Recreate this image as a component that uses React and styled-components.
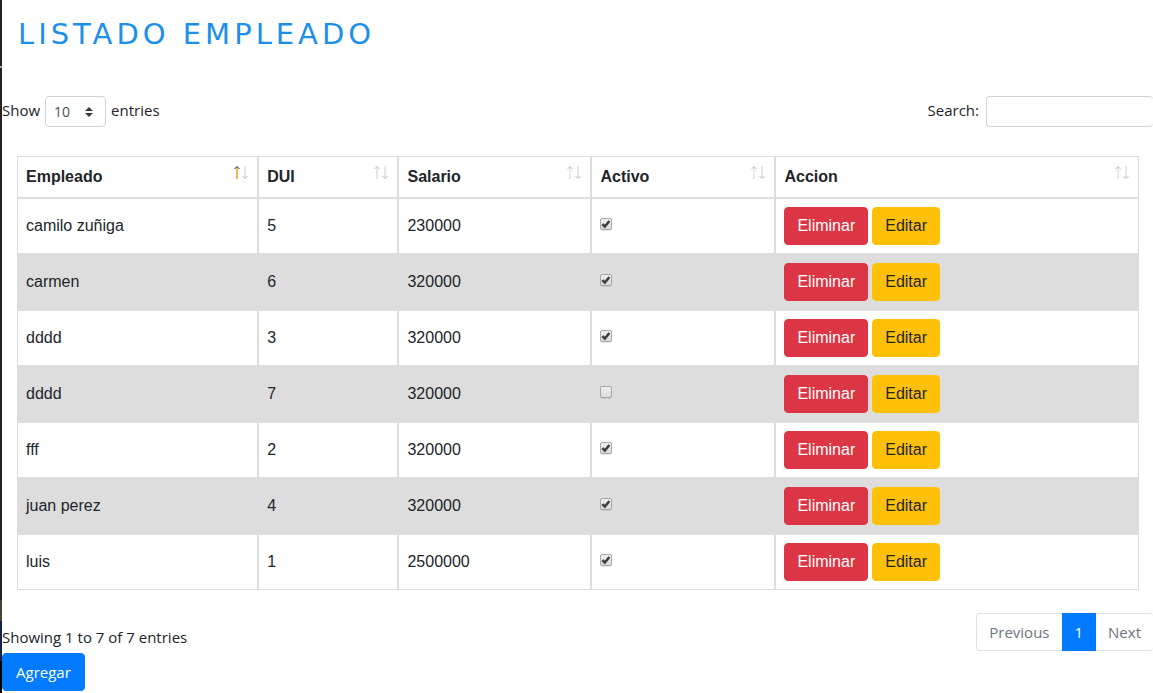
import React from 'react';
import styled, { createGlobalStyle } from 'styled-components';

const line = '#dddddd';
const ui = '"Open Sans", "Noto Sans", sans-serif';
const arial = '"Liberation Sans", Arial, sans-serif';

const checkMark =
  "url(\"data:image/svg+xml,%3Csvg xmlns='http://www.w3.org/2000/svg' viewBox='0 0 10 10'%3E%3Cpath d='M1.4 5.2l2.4 2.4L8.4 2' fill='none' stroke='%23404040' stroke-width='2.6'/%3E%3C/svg%3E\")";
const selectArrows =
  "url(\"data:image/svg+xml,%3Csvg xmlns='http://www.w3.org/2000/svg' viewBox='0 0 4 5'%3E%3Cpath fill='%23343a40' d='M2 0L0 2h4zm0 5L0 3h4z'/%3E%3C/svg%3E\")";

const GlobalStyle = createGlobalStyle`
  * { box-sizing: border-box; }
  body {
    margin: 0;
    background: #fff;
    color: #212529;
    font: 15px/24px ${ui};
  }
`;

const Page = styled.main`
  min-height: 100vh;
  padding-left: 2px;
  background: linear-gradient(
      #222 66px, #aaa 66px, #aaa 68px, #222 68px, #222 600px,
      #444438 600px, #444438 621px, #14224a 621px, #14224a 661px, #000 661px
    ) left top / 2px 100% no-repeat;
`;

const Title = styled.h1`
  margin: 0;
  padding: 16px 16px 44px;
  color: #1c90e8;
  font: 400 29px/36px "DejaVu Sans", Verdana, sans-serif;
  letter-spacing: 4px;
  text-transform: uppercase;
`;

const Bar = styled.div`
  display: flex;
  justify-content: space-between;
  align-items: flex-start;
`;

const Field = styled.label`
  display: flex;
  align-items: flex-start;
  gap: ${(p) => p.$gap}px;
  line-height: 28px;
`;

const LengthSelect = styled.select`
  appearance: none;
  width: 61px;
  height: 31px;
  padding: 0 8px;
  border: 1px solid #ced4da;
  border-radius: 4px;
  background: #fff ${selectArrows} right 12px center / 8px 10px no-repeat;
  color: #495057;
  font: 14px/20px ${ui};
`;

const SearchInput = styled.input`
  width: 167px;
  height: 31px;
  padding: 4px 8px;
  border: 1px solid #ced4da;
  border-right-width: 0;
  border-radius: 4px;
  font: 14px/20px ${ui};
`;

const TableWrap = styled.div`
  padding: 29px 14px 23px 15px;
`;

const Table = styled.table`
  width: 100%;
  table-layout: fixed;
  border-collapse: separate;
  border-spacing: 0;
  font: 16px/24px ${arial};
`;

const HeadCell = styled.th`
  width: ${(p) => p.$width};
  padding: 8px;
  border: 1px solid ${line};
  text-align: left;
`;

const SortButton = styled.button`
  display: flex;
  justify-content: space-between;
  align-items: flex-start;
  width: 100%;
  padding: 0;
  border: 0;
  background: none;
  color: inherit;
  font: 700 16px/24px ${arial};
  cursor: pointer;
`;

const Row = styled.tr`
  background: #fff;
  &:nth-child(even) { background: ${line}; }
`;

const Cell = styled.td`
  padding: 8px;
  border: 1px solid ${line};
  vertical-align: middle;
`;

const Check = styled.input`
  appearance: none;
  display: block;
  width: 12px;
  height: 12px;
  margin: 0 0 4px;
  border: 1px solid #a6a6a6;
  border-radius: 2px;
  background: linear-gradient(#eee, #dcdcdc);
  box-shadow: 0 1px 0 rgba(0, 0, 0, 0.08);
  &:checked {
    background: ${checkMark} center / 10px 10px no-repeat, linear-gradient(#eee, #dcdcdc);
  }
`;

const Actions = styled.div`
  display: flex;
  gap: 4px;
`;

const variants = {
  danger: ['#dc3545', '#fff', 12],
  warning: ['#ffc107', '#212529', 12],
  primary: ['#007bff', '#fff', 13],
};

const Button = styled.button`
  display: block;
  padding: 6px ${(p) => variants[p.$variant][2]}px;
  border: 1px solid ${(p) => variants[p.$variant][0]};
  border-radius: 4px;
  background: ${(p) => variants[p.$variant][0]};
  color: ${(p) => variants[p.$variant][1]};
  font: inherit;
  cursor: pointer;
`;

const Info = styled.div`
  padding: 12px 0 4px;
`;

const Pager = styled.nav`
  display: flex;
`;

const PageLink = styled.a`
  padding: 6px 12px;
  border: 1px solid ${(p) => (p.$active ? '#007bff' : '#dee2e6')};
  border-right-width: ${(p) => (p.$active ? 1 : 0)}px;
  background: ${(p) => (p.$active ? '#007bff' : '#fff')};
  color: ${(p) => (p.$active ? '#fff' : '#6c757d')};
  text-decoration: none;
  &:first-child { border-radius: 4px 0 0 4px; }
  &:last-child { border-left-width: 0; border-radius: 0 4px 4px 0; }
`;

function SortIcon({ ascending }) {
  return (
    <svg width="16" height="16" viewBox="0 0 16 16" fill="none" aria-hidden="true">
      <path d="M4 2v12" stroke={ascending ? '#f0b45c' : '#e8e8e8'} strokeWidth="2" />
      <path d="M1.5 4l2.5-2.5L6.500 4" stroke={ascending ? '#333' : '#bbb'} />
      <path d="M12 1v12" stroke="#e8e8e8" strokeWidth="2" />
      <path d="M9.500 11l2.500 2.500L14.500 11" stroke="#bbb" />
    </svg>
  );
}

const columns = [
  ['Empleado', '21.5%'],
  ['DUI', '12.5%'],
  ['Salario', '17.2%'],
  ['Activo', '16.4%'],
  ['Accion', 'auto'],
];

const employees = [
  ['camilo zuñiga', 5, 230000, true],
  ['carmen', 6, 320000, true],
  ['dddd', 3, 320000, true],
  ['dddd', 7, 320000, false],
  ['fff', 2, 320000, true],
  ['juan perez', 4, 320000, true],
  ['luis', 1, 2500000, true],
];

export default function App() {
  return (
    <Page>
      <GlobalStyle />
      <Title>Listado Empleado</Title>
      <Bar>
        <Field $gap={5}>
          Show
          <LengthSelect defaultValue="10">
            <option>10</option>
            <option>25</option>
            <option>50</option>
            <option>100</option>
          </LengthSelect>
          entries
        </Field>
        <Field $gap={7}>
          Search:
          <SearchInput type="search" />
        </Field>
      </Bar>
      <TableWrap>
        <Table>
          <thead>
            <tr>
              {columns.map(([name, width], i) => (
                <HeadCell key={name} $width={width} aria-sort={i === 0 ? 'ascending' : undefined}>
                  <SortButton type="button">
                    {name}
                    <SortIcon ascending={i === 0} />
                  </SortButton>
                </HeadCell>
              ))}
            </tr>
          </thead>
          <tbody>
            {employees.map(([name, dui, salary, active]) => (
              <Row key={dui}>
                <Cell>{name}</Cell>
                <Cell>{dui}</Cell>
                <Cell>{salary}</Cell>
                <Cell>
                  <Check type="checkbox" defaultChecked={active} aria-label={`Activo: ${name}`} />
                </Cell>
                <Cell>
                  <Actions>
                    <Button type="button" $variant="danger">Eliminar</Button>
                    <Button type="button" $variant="warning">Editar</Button>
                  </Actions>
                </Cell>
              </Row>
            ))}
          </tbody>
        </Table>
      </TableWrap>
      <Bar>
        <div>
          <Info>Showing 1 to 7 of 7 entries</Info>
          <Button type="button" $variant="primary">Agregar</Button>
        </div>
        <Pager aria-label="Pages">
          <PageLink href="#previous">Previous</PageLink>
          <PageLink href="#1" $active aria-current="page">1</PageLink>
          <PageLink href="#next">Next</PageLink>
        </Pager>
      </Bar>
    </Page>
  );
}
